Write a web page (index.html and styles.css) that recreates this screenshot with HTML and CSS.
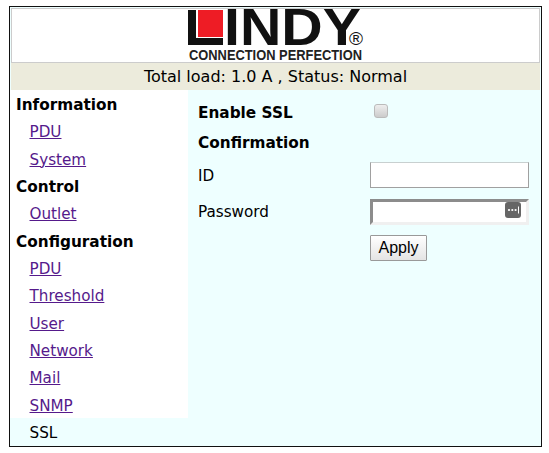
FILE: index.html
```html
<!DOCTYPE html>
<html lang="en">
<head>
<meta charset="utf-8">
<title>LINDY</title>
<link rel="stylesheet" href="styles.css">
</head>
<body>
<div class="frame">
  <header class="banner">
    <svg class="logo" width="176" height="52" viewBox="0 0 176 52" aria-label="LINDY Connection Perfection">
      <rect x="0" y="0" width="8" height="35" fill="#111"/>
      <rect x="0" y="28" width="35" height="7" fill="#111"/>
      <rect x="10" y="0" width="25" height="27" fill="#ee1c25"/>
      <text class="logo-word" x="36" y="35" textLength="137" lengthAdjust="spacingAndGlyphs">INDY</text>
      <text class="logo-reg" x="161" y="35" textLength="14" lengthAdjust="spacingAndGlyphs">®</text>
      <text class="logo-tag" x="1" y="50" textLength="173" lengthAdjust="spacingAndGlyphs">CONNECTION PERFECTION</text>
    </svg>
  </header>
  <div class="status">Total load: 1.0 A , Status: Normal</div>
  <div class="main">
    <nav class="side">
      <div class="group">Information</div>
      <a class="item" href="#a">PDU</a>
      <a class="item" href="#b">System</a>
      <div class="group">Control</div>
      <a class="item" href="#c">Outlet</a>
      <div class="group">Configuration</div>
      <a class="item" href="#d">PDU</a>
      <a class="item" href="#e">Threshold</a>
      <a class="item" href="#f">User</a>
      <a class="item" href="#g">Network</a>
      <a class="item" href="#h">Mail</a>
      <a class="item" href="#i">SNMP</a>
      <div class="item current">SSL</div>
    </nav>
    <form class="form">
      <div class="label strong">Enable SSL</div>
      <div><input class="check" type="checkbox"></div>
      <div class="label strong">Confirmation</div>
      <div></div>
      <div class="label label-id">ID</div>
      <div><input class="field" type="text"></div>
      <div class="label">Password</div>
      <div class="pw-wrap">
        <input class="field pw" type="password">
        <svg class="pw-icon" width="16" height="16" viewBox="0 0 16 16"><rect width="16" height="16" rx="3" fill="#666"/><circle cx="4" cy="8" r="1.1" fill="#fff"/><circle cx="7.3" cy="8" r="1.1" fill="#fff"/><circle cx="10.6" cy="8" r="1.1" fill="#fff"/><rect x="13" y="4.5" width="1" height="7" fill="#fff"/></svg>
      </div>
      <div></div>
      <div><button class="apply" type="button">Apply</button></div>
    </form>
  </div>
</div>
</body>
</html>
```
FILE: styles.css
```css
html, body { margin: 0; padding: 0; background: #fff; }
body { padding: 6px 0 0 9px; font-family: "DejaVu Sans", Verdana, sans-serif; font-size: 15.2px; color: #000; }
.frame { width: 531px; height: 439px; border: 1px solid #111; display: flex; flex-direction: column; overflow: hidden; background: #eeffff; }
.banner { box-sizing: border-box; height: 55px; margin: 1px 1px 0; padding-top: 1px; background: #fff; border: 1px solid #ccc; display: flex; justify-content: center; align-items: flex-start; flex: none; }
.logo { display: block; overflow: visible; }
.logo-word { font-family: "Liberation Sans", Arial, sans-serif; font-size: 51px; font-weight: bold; fill: #111; }
.logo-reg { font-family: "Liberation Sans", Arial, sans-serif; font-size: 18px; fill: #111; }
.logo-tag { font-family: "Liberation Sans", Arial, sans-serif; font-size: 14px; font-weight: bold; fill: #222; }
.status { height: 27px; line-height: 28px; margin: 0 1px; background: #ecebdc; text-align: center; font-size: 16px; flex: none; }
.main { flex: 1; display: flex; min-height: 0; }
.side { width: 178px; flex: none; display: flex; flex-direction: column; background: #fff; }
.group, .item { box-sizing: border-box; height: 27.33px; padding-top: 4px; line-height: 23px; flex: none; }
.group { font-weight: bold; font-size: 15.3px; padding-left: 6px; }
.item { padding-left: 19.5px; color: #551a8b; }
.current { color: #000; background: #eeffff; height: 29px; }
.form { flex: 1; display: grid; grid-template-columns: 172px 159px; grid-template-rows: 36px 24px 40px 33px 40px; padding: 5px 0 0 10px; align-content: start; align-items: center; }
.label { line-height: 20px; }
.label-id { padding-top: 2px; }
.strong { font-weight: bold; font-size: 15.3px; }
.check { appearance: none; -webkit-appearance: none; display: block; box-sizing: border-box; width: 14px; height: 14px; margin: 0 0 4px 4px; border: 1px solid #bbb; border-radius: 3px; background: linear-gradient(#eee, #ccc); }
.field { display: block; box-sizing: border-box; width: 159px; height: 26px; margin: 0; padding: 1px 2px; background: #fff; border: 1px solid #a0a0a0; border-top-color: #c8d0d0; border-radius: 0; }
.pw-wrap { position: relative; }
.pw { border: 3px solid #f0f0f0; border-top-color: #8c8c8c; border-left-color: #8c8c8c; }
.pw-icon { position: absolute; right: 8px; top: 3px; }
.apply { display: block; box-sizing: border-box; width: 57px; height: 26px; padding: 0; font-family: "Liberation Sans", Arial, sans-serif; font-size: 16px; color: #000; background: linear-gradient(#fff, #e4e4e4); border: 1px solid #999; border-radius: 1px; }
```
